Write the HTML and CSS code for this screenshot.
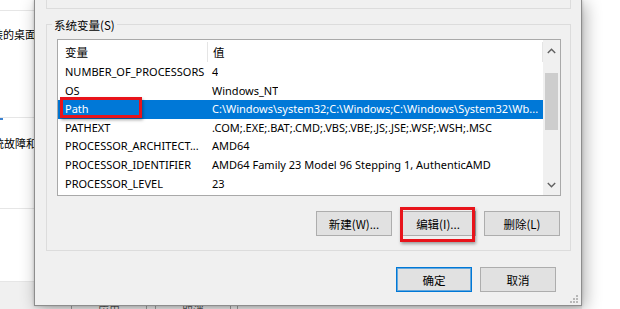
FILE: index.html
```html
<!DOCTYPE html>
<html lang="zh-CN">
<head>
<meta charset="utf-8">
<title>系统变量</title>
<link rel="stylesheet" href="styles.css">
</head>
<body>
<div class="screen">
  <div class="under-left">
    <div class="ul-sec ul-s1"></div>
    <div class="ul-sec ul-s2"><span class="ul-text">安装的桌面</span></div>
    <div class="ul-sec ul-s3"><span class="ul-link"></span><span class="ul-text ul-t2">系统故障和</span></div>
    <div class="ul-sec ul-s4"></div>
    <div class="ul-grey"></div>
  </div>
  <div class="dialog">
    <div class="group-top"></div>
    <div class="group">
      <div class="group-label">系统变量(S)</div>
      <div class="list">
        <div class="list-main">
          <div class="lrow lhead">
            <div class="c-name">变量</div>
            <div class="c-val">值</div>
          </div>
          <div class="lrow"><div class="c-name">NUMBER_OF_PROCESSORS</div><div class="c-val">4</div></div>
          <div class="lrow"><div class="c-name">OS</div><div class="c-val">Windows_NT</div></div>
          <div class="lrow sel"><div class="c-name mark-cell">Path<span class="mark mark-path"></span></div><div class="c-val">C:\Windows\system32;C:\Windows;C:\Windows\System32\Wb...</div></div>
          <div class="lrow"><div class="c-name">PATHEXT</div><div class="c-val">.COM;.EXE;.BAT;.CMD;.VBS;.VBE;.JS;.JSE;.WSF;.WSH;.MSC</div></div>
          <div class="lrow"><div class="c-name">PROCESSOR_ARCHITECT...</div><div class="c-val">AMD64</div></div>
          <div class="lrow"><div class="c-name">PROCESSOR_IDENTIFIER</div><div class="c-val">AMD64 Family 23 Model 96 Stepping 1, AuthenticAMD</div></div>
          <div class="lrow"><div class="c-name">PROCESSOR_LEVEL</div><div class="c-val">23</div></div>
        </div>
        <div class="vscroll">
          <div class="sb-btn"><svg width="9" height="6" viewBox="0 0 9 6"><polyline points="0.8,5 4.5,1.3 8.2,5" fill="none" stroke="#606060" stroke-width="1.4"/></svg></div>
          <div class="sb-track"><div class="sb-thumb"></div></div>
          <div class="sb-btn"><svg width="9" height="6" viewBox="0 0 9 6"><polyline points="0.8,1 4.5,4.7 8.2,1" fill="none" stroke="#606060" stroke-width="1.4"/></svg></div>
        </div>
      </div>
      <div class="btn-row">
        <button class="btn">新建(W)...</button>
        <button class="btn mark-cell">编辑(I)...<span class="mark mark-edit"></span></button>
        <button class="btn">删除(L)</button>
      </div>
    </div>
    <div class="btn-row foot">
      <button class="btn btn-default">确定</button>
      <button class="btn">取消</button>
    </div>
    <div class="grip">
      <svg width="8" height="8" viewBox="0 0 8 8" fill="#b8b8b8"><rect x="6" y="0" width="2" height="2"/><rect x="3" y="3" width="2" height="2"/><rect x="6" y="3" width="2" height="2"/><rect x="0" y="6" width="2" height="2"/><rect x="3" y="6" width="2" height="2"/><rect x="6" y="6" width="2" height="2"/></svg>
    </div>
  </div>
  <div class="under-right"></div>
</div>
<div class="under-bottom">
  <div class="ub-btn ub-b1"><span>应用</span></div>
  <div class="ub-btn ub-b2"><span>取消</span></div>
  <div class="ub-btn ub-b3"></div>
</div>
</body>
</html>
```

FILE: styles.css
```css
html, body {
  margin: 0;
  padding: 0;
}
body {
  width: 620px;
  height: 309px;
  overflow: hidden;
  background: #ffffff;
  font-family: "Noto Sans", "Noto Sans CJK SC", sans-serif;
  font-size: 11px;
  color: #000;
}
.screen {
  display: flex;
  height: 306px;
}

/* underlying window on the left */
.under-left {
  width: 34px;
  flex: none;
  display: flex;
  flex-direction: column;
  background: #fff;
  overflow: hidden;
}
.ul-sec {
  border-bottom: 1px solid #e6e6e6;
  display: flex;
  justify-content: flex-end;
  white-space: nowrap;
  font-family: "Noto Sans CJK SC", sans-serif;
  font-size: 11px;
}
.ul-s1 { height: 10px; }
.ul-s2 { height: 106px; align-items: flex-start; }
.ul-s2 .ul-text { margin-top: 15px; margin-right: -2px; line-height: 16px; }
.ul-s3 {
  height: 90px;
  flex-direction: column;
  justify-content: flex-start;
  align-items: flex-end;
}
.ul-link {
  align-self: flex-start;
  width: 3px;
  height: 2px;
  background: #3b82d0;
  margin-top: 0;
}
.ul-t2 { margin-top: 15px; margin-right: -3px; line-height: 16px; }
.ul-s4 { height: 72px; }
.ul-grey { flex: 1; background: #f0f0f0; }

/* dialog */
.dialog {
  width: 525px;
  flex: none;
  height: 305px;
  background: #f0f0f0;
  border: 1px solid #8d8d8d;
  border-top: none;
  box-shadow: 3px 3px 16px rgba(0, 0, 0, 0.32), 0 0 3px rgba(0, 0, 0, 0.2);
  display: flex;
  flex-direction: column;
  padding: 0 10px 0 11px;
  position: relative;
  z-index: 2;
}
.group-top {
  height: 8px;
  border: 1px solid #dcdcdc;
  border-top: none;
}
.group {
  margin-top: 15px;
  border: 1px solid #dcdcdc;
  padding: 0 9px 14px 10px;
  display: flex;
  flex-direction: column;
}
.group-label {
  align-self: flex-start;
  margin: -8px 0 0 -5px;
  padding: 0 2px;
  height: 16px;
  line-height: 16px;
  background: #f0f0f0;
  font-family: "Noto Sans CJK SC", sans-serif;
  font-size: 11.5px;
}

/* list view */
.list {
  margin-top: 6px;
  height: 155px;
  border: 1px solid #a9a9a9;
  background: #fff;
  display: flex;
}
.list-main {
  flex: 1;
  min-width: 0;
  display: flex;
  flex-direction: column;
}
.lrow {
  display: flex;
  height: 18.6px;
  line-height: 18px;
  white-space: nowrap;
}
.lhead {
  height: 23px;
  font-family: "Noto Sans CJK SC", sans-serif;
  font-size: 11.5px;
}
.lhead .c-name {
  border-right: 1px solid #e5e5e5;
  height: 20px;
  margin-top: 2px;
  line-height: 20px;
}
.lhead .c-val {
  flex: 1;
  border-right: 1px solid #e5e5e5;
  height: 20px;
  margin-top: 2px;
  line-height: 20px;
}
.c-name {
  width: 142px;
  padding-left: 7px;
  flex: none;
  overflow: hidden;
}
.c-val {
  padding-left: 5px;
  overflow: hidden;
}
.sel {
  background: #0078d7;
  color: #fff;
}
.mark-cell { position: relative; overflow: visible; }
.mark {
  position: absolute;
  border: 3px solid #e8141b;
  box-shadow: 1px 2px 3px rgba(0, 0, 0, 0.35);
  pointer-events: none;
}
.mark-path {
  left: 2px;
  top: -3px;
  width: 76px;
  height: 15px;
}
.mark-edit {
  left: -1px;
  top: -5px;
  width: 69px;
  height: 29px;
}

/* scrollbar */
.vscroll {
  width: 17px;
  flex: none;
  background: #f0f0f0;
  display: flex;
  flex-direction: column;
}
.sb-btn {
  height: 21px;
  display: flex;
  align-items: center;
  justify-content: center;
}
.sb-track {
  flex: 1;
  padding: 12px 2px 0;
}
.sb-thumb {
  height: 57px;
  background: #cdcdcd;
}

/* buttons */
.btn-row {
  display: flex;
  justify-content: flex-end;
  gap: 8px;
  margin-top: 15px;
  margin-right: 1px;
}
.btn {
  width: 76px;
  height: 25px;
  box-sizing: border-box;
  border: 1px solid #adadad;
  background: #e1e1e1;
  font-family: "Noto Sans CJK SC", sans-serif;
  font-size: 11.5px;
  color: #000;
  padding: 0;
  line-height: 22px;
}
.foot {
  margin-top: 16px;
  margin-right: 15px;
}
.btn-default {
  border: 1px solid #0078d7;
  box-shadow: inset 0 0 0 1px rgba(0, 120, 215, 0.55);
}
.grip {
  position: absolute;
  right: 3px;
  bottom: 2px;
  line-height: 0;
}

/* underlying to right */
.under-right {
  flex: 1;
  background: #fff;
}

/* underlying strip at the bottom */
.under-bottom {
  height: 3px;
  width: 582px;
  background: #f0f0f0;
  display: flex;
  overflow: hidden;
}
.ub-btn {
  height: 10px;
  border-left: 1px solid #a0a0a0;
  border-right: 1px solid #a0a0a0;
  font-family: "Noto Sans CJK SC", sans-serif;
  font-size: 11px;
  line-height: 12px;
  text-align: center;
  color: #555;
}
.ub-btn span { position: relative; top: -2px; }
.ub-b1 { margin-left: 71px; width: 74px; }
.ub-b2 { margin-left: 8px; width: 74px; }
.ub-b3 { margin-left: 6px; width: 80px; border-right: none; }
```
